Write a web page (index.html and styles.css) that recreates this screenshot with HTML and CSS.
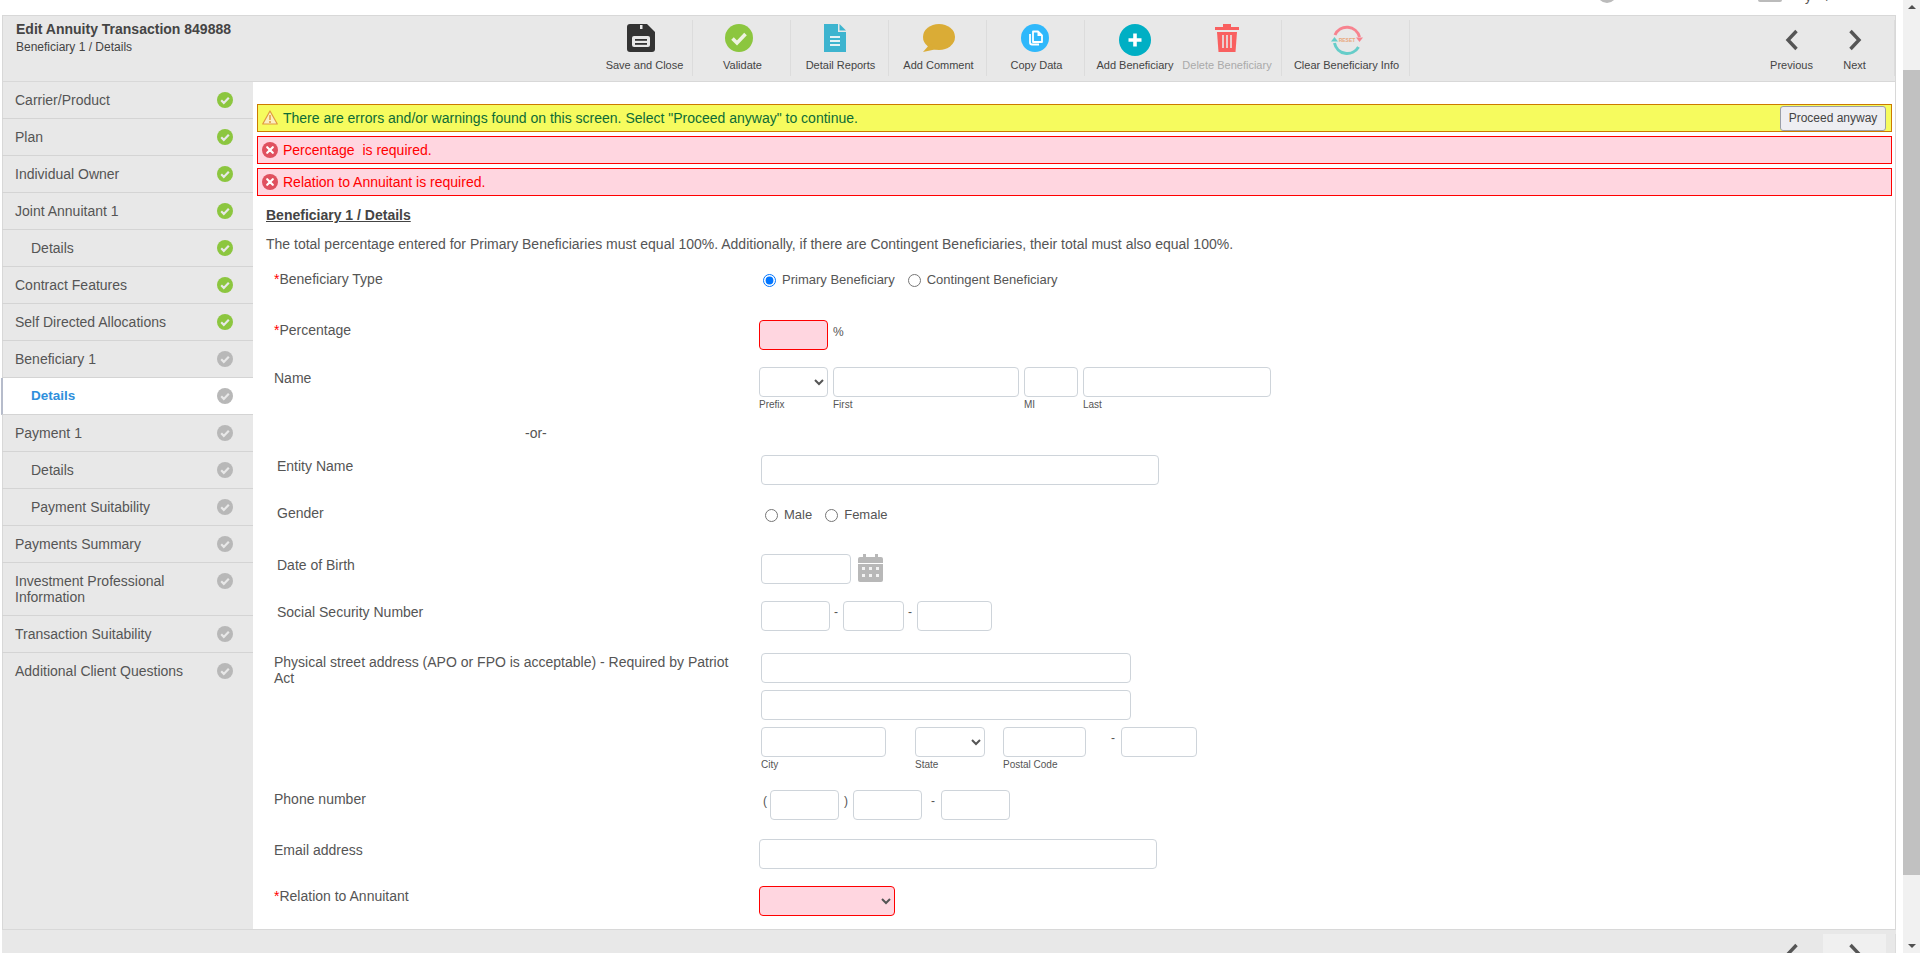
FILE: index.html
```html
<!DOCTYPE html>
<html lang="en">
<head>
    <meta charset="UTF-8">
    <title>Edit Annuity Transaction 849888</title>
    <link rel="stylesheet" href="styles.css">
</head>
<body>
    <svg class="sprites" width="0" height="0">
        <symbol id="i-check" viewBox="0 0 16 16">
            <circle cx="8" cy="8" r="8" fill="currentColor"/>
            <path d="M4.2 8.3l2.6 2.6 5-5.2" fill="none" stroke="#e8e8e8" stroke-width="2.2"/>
        </symbol>
        <symbol id="i-error" viewBox="0 0 16 16">
            <circle cx="8" cy="8" r="8" fill="#e0505f"/>
            <path d="M5.2 5.2l5.6 5.6M10.8 5.2l-5.6 5.6" stroke="#fff" stroke-width="2.2" stroke-linecap="round"/>
        </symbol>
        <symbol id="i-prev" viewBox="0 0 14 22">
            <path d="M11.5 2L3 11l8.500 9" fill="none" stroke="#555" stroke-width="3.4"/>
        </symbol>
        <symbol id="i-next" viewBox="0 0 14 22">
            <path d="M2.500 2L11 11l-8.500 9" fill="none" stroke="#555" stroke-width="3.4"/>
        </symbol>
    </svg>

    <div class="page">
        <div class="top-strip">
            <span class="top-ring"></span>
            <span class="top-box"></span>
            <span class="top-text">y /</span>
        </div>

        <div class="app">
            <header class="app-header">
                <div class="title-block">
                    <div class="title">Edit Annuity Transaction 849888</div>
                    <div class="subtitle">Beneficiary 1 / Details</div>
                </div>

                <div class="toolbar">
                    <div class="tool">
                        <svg class="tool-icon icon-left" width="28" height="28" viewBox="0 0 28 28">
                            <path d="M3 0h17l8 8v17a3 3 0 0 1-3 3H3a3 3 0 0 1-3-3V3a3 3 0 0 1 3-3z" fill="#333"/>
                            <rect x="13" y="1" width="2.500" height="4" fill="#e8e8e8"/>
                            <rect x="5" y="12" width="18" height="11" rx="2" fill="#e8e8e8"/>
                            <rect x="8" y="15" width="12" height="1.800" fill="#333"/>
                            <rect x="8" y="19" width="12" height="1.800" fill="#333"/>
                        </svg>
                        <span>Save and Close</span>
                    </div>
                    <div class="tool">
                        <svg class="tool-icon icon-left" width="28" height="28" viewBox="0 0 28 28">
                            <circle cx="14" cy="14" r="14" fill="#8cc63f"/>
                            <path d="M7.500 14.500l4.500 4.500 8.500-9" fill="none" stroke="#eef3e0" stroke-width="3.600"/>
                        </svg>
                        <span>Validate</span>
                    </div>
                    <div class="tool">
                        <svg class="tool-icon icon-far-left" width="22" height="28" viewBox="0 0 22 28">
                            <path d="M0 0h14v8h8v20H0z" fill="#3db4cf"/>
                            <path d="M15.500 0L22 6.500h-6.500z" fill="#3db4cf"/>
                            <path d="M6 13h10M6 17h10M6 21h10" stroke="#e4f2f5" stroke-width="1.800"/>
                        </svg>
                        <span>Detail Reports</span>
                    </div>
                    <div class="tool">
                        <svg class="tool-icon" width="32" height="28" viewBox="0 0 32 28">
                            <ellipse cx="16" cy="13" rx="16" ry="13" fill="#daac36"/>
                            <path d="M7 20L0 28l14-3z" fill="#daac36"/>
                        </svg>
                        <span>Add Comment</span>
                    </div>
                    <div class="tool">
                        <svg class="tool-icon icon-near-left" width="28" height="28" viewBox="0 0 28 28">
                            <circle cx="14" cy="14" r="14" fill="#2fb8fb"/>
                            <path d="M9 10v8.500a2 2 0 0 0 2 2h7" fill="none" stroke="#fff" stroke-width="1.800"/>
                            <path d="M12 7.500h5l4 4v6.500h-9z" fill="none" stroke="#fff" stroke-width="1.800" stroke-linejoin="round"/>
                            <path d="M16.500 7.500v4.500h4.500z" fill="#fff"/>
                        </svg>
                        <span>Copy Data</span>
                    </div>
                    <div class="tool tool-plain">
                        <svg class="tool-icon" width="32" height="32" viewBox="0 0 32 32">
                            <circle cx="16" cy="16" r="16" fill="#00afc4"/>
                            <path d="M16 9.500v13M9.500 16h13" stroke="#fff" stroke-width="3.600"/>
                        </svg>
                        <span>Add Beneficiary</span>
                    </div>
                    <div class="tool tool-delete is-disabled">
                        <svg class="tool-icon" width="24" height="28" viewBox="0 0 24 28">
                            <path d="M8 3V0h8v3h8v3H0V3z" fill="#f96060"/>
                            <path d="M2 8h20l-1.500 20H3.500z" fill="#f96060"/>
                            <path d="M8 11v13M12 11v13M16 11v13" stroke="#e8e8e8" stroke-width="1.600"/>
                        </svg>
                        <span>Delete Beneficiary</span>
                    </div>
                    <div class="tool tool-wide">
                        <svg class="tool-icon" width="32" height="32" viewBox="0 0 32 32">
                            <path d="M4 11A13 13 0 0 1 28.500 13" fill="none" stroke="#f7838f" stroke-width="3"/>
                            <path d="M25 13.500h7l-3.500 4.500z" fill="#f7838f"/>
                            <path d="M27.500 23A13 13 0 0 1 3.500 19" fill="none" stroke="#66cdc9" stroke-width="3"/>
                            <path d="M0 17.500h7l-3.500-4.500z" fill="#66cdc9"/>
                            <text x="16" y="18" class="reset-word">RESET</text>
                        </svg>
                        <span>Clear Beneficiary Info</span>
                    </div>
                </div>

                <div class="pager">
                    <div class="pager-btn">
                        <svg width="14" height="22"><use href="#i-prev"/></svg>
                        <span>Previous</span>
                    </div>
                    <div class="pager-btn">
                        <svg width="14" height="22"><use href="#i-next"/></svg>
                        <span>Next</span>
                    </div>
                </div>
            </header>

            <div class="app-body">
                <nav class="sidebar">
                    <a class="nav-item is-done">Carrier/Product<svg class="nav-check"><use href="#i-check"/></svg></a>
                    <a class="nav-item is-done">Plan<svg class="nav-check"><use href="#i-check"/></svg></a>
                    <a class="nav-item is-done">Individual Owner<svg class="nav-check"><use href="#i-check"/></svg></a>
                    <a class="nav-item is-done">Joint Annuitant 1<svg class="nav-check"><use href="#i-check"/></svg></a>
                    <a class="nav-item nav-sub is-done">Details<svg class="nav-check"><use href="#i-check"/></svg></a>
                    <a class="nav-item is-done">Contract Features<svg class="nav-check"><use href="#i-check"/></svg></a>
                    <a class="nav-item is-done">Self Directed Allocations<svg class="nav-check"><use href="#i-check"/></svg></a>
                    <a class="nav-item">Beneficiary 1<svg class="nav-check"><use href="#i-check"/></svg></a>
                    <a class="nav-item nav-sub is-active">Details<svg class="nav-check"><use href="#i-check"/></svg></a>
                    <a class="nav-item">Payment 1<svg class="nav-check"><use href="#i-check"/></svg></a>
                    <a class="nav-item nav-sub">Details<svg class="nav-check"><use href="#i-check"/></svg></a>
                    <a class="nav-item nav-sub">Payment Suitability<svg class="nav-check"><use href="#i-check"/></svg></a>
                    <a class="nav-item">Payments Summary<svg class="nav-check"><use href="#i-check"/></svg></a>
                    <a class="nav-item nav-tall">Investment Professional Information<svg class="nav-check"><use href="#i-check"/></svg></a>
                    <a class="nav-item">Transaction Suitability<svg class="nav-check"><use href="#i-check"/></svg></a>
                    <a class="nav-item">Additional Client Questions<svg class="nav-check"><use href="#i-check"/></svg></a>
                </nav>

                <main class="main">
                    <div class="alert alert-warn">
                        <svg width="16" height="15" viewBox="0 0 16 15">
                            <path d="M8 1L15.300 14H.7z" fill="#fbeec0" stroke="#e09a3e" stroke-width="1.200" stroke-linejoin="round"/>
                            <path d="M8 5v5M8 11v2" stroke="#e09a3e" stroke-width="1.500"/>
                        </svg>
                        <span>There are errors and/or warnings found on this screen. Select "Proceed anyway" to continue.</span>
                        <button class="proceed">Proceed anyway</button>
                    </div>
                    <div class="alert alert-error">
                        <svg width="16" height="16"><use href="#i-error"/></svg>
                        <span>Percentage&nbsp; is required.</span>
                    </div>
                    <div class="alert alert-error">
                        <svg width="16" height="16"><use href="#i-error"/></svg>
                        <span>Relation to Annuitant is required.</span>
                    </div>

                    <h2 class="section-title">Beneficiary 1 / Details</h2>
                    <p class="section-note">The total percentage entered for Primary Beneficiaries must equal 100%. Additionally, if there are Contingent Beneficiaries, their total must also equal 100%.</p>

                    <form class="form">
                        <div class="row row-type">
                            <label class="row-label"><em>*</em>Beneficiary Type</label>
                            <div class="fields radios">
                                <input type="radio" name="btype" checked><span>Primary Beneficiary</span>
                                <input type="radio" name="btype" class="radio-next"><span>Contingent Beneficiary</span>
                            </div>
                        </div>

                        <div class="row row-pct">
                            <label class="row-label"><em>*</em>Percentage</label>
                            <div class="fields">
                                <input class="box w-pct is-invalid"><span class="unit">%</span>
                            </div>
                        </div>

                        <div class="row row-name">
                            <label class="row-label">Name</label>
                            <div class="fields">
                                <div class="field"><select class="box w-pct"><option></option></select><small>Prefix</small></div>
                                <div class="field"><input class="box w-first"><small>First</small></div>
                                <div class="field"><input class="box w-mi"><small>MI</small></div>
                                <div class="field"><input class="box w-last"><small>Last</small></div>
                            </div>
                        </div>

                        <div class="row-or">-or-</div>

                        <div class="row row-entity is-inset">
                            <label class="row-label">Entity Name</label>
                            <div class="fields"><input class="box w-full"></div>
                        </div>

                        <div class="row row-gender is-inset">
                            <label class="row-label">Gender</label>
                            <div class="fields radios radios-gender">
                                <input type="radio" name="gender"><span>Male</span>
                                <input type="radio" name="gender" class="radio-next"><span>Female</span>
                            </div>
                        </div>

                        <div class="row row-dob is-inset">
                            <label class="row-label">Date of Birth</label>
                            <div class="fields">
                                <input class="box w-dob">
                                <svg class="calendar" width="25" height="28" viewBox="0 0 25 28">
                                    <path d="M5 0h3v3h9V0h3v3h3a2 2 0 0 1 2 2v4H0V5a2 2 0 0 1 2-2h3z" fill="#b8b8b8"/>
                                    <path d="M0 10h25v16a2 2 0 0 1-2 2H2a2 2 0 0 1-2-2z" fill="#b8b8b8"/>
                                    <path d="M4 13h3v3H4zM11 13h3v3h-3zM18 13h3v3h-3zM4 20h3v3H4zM11 20h3v3h-3zM18 20h3v3h-3z" fill="#f2f2f2"/>
                                </svg>
                            </div>
                        </div>

                        <div class="row row-ssn is-inset">
                            <label class="row-label">Social Security Number</label>
                            <div class="fields">
                                <input class="box w-pct"><span class="sep">-</span>
                                <input class="box w-ssn2"><span class="sep">-</span>
                                <input class="box w-ssn3">
                            </div>
                        </div>

                        <div class="row row-addr">
                            <label class="row-label row-label-flush">Physical street address (APO or FPO is acceptable) - Required by Patriot Act</label>
                            <div class="fields fields-stack">
                                <input class="box w-addr">
                                <input class="box w-addr">
                                <div class="addr-line">
                                    <div class="field"><input class="box w-city"><small>City</small></div>
                                    <div class="field field-state"><select class="box w-state"><option></option></select><small>State</small></div>
                                    <div class="field field-zip"><input class="box w-zip"><small>Postal Code</small></div>
                                    <span class="sep sep-zip">-</span>
                                    <div class="field"><input class="box w-zip4"></div>
                                </div>
                            </div>
                        </div>

                        <div class="row row-phone">
                            <label class="row-label row-label-flush">Phone number</label>
                            <div class="fields phone">
                                <span class="paren">(</span><input class="box w-pct"><span class="paren paren-close">)</span>
                                <input class="box w-pct"><span class="sep sep-phone">-</span>
                                <input class="box w-pct">
                            </div>
                        </div>

                        <div class="row row-email">
                            <label class="row-label">Email address</label>
                            <div class="fields"><input class="box w-email"></div>
                        </div>

                        <div class="row row-rel">
                            <label class="row-label row-label-rel"><em>*</em>Relation to Annuitant</label>
                            <div class="fields"><select class="box w-rel is-invalid"><option></option></select></div>
                        </div>
                    </form>
                </main>
            </div>

            <footer class="app-footer">
                <div class="pager pager-foot">
                    <div class="pager-btn">
                        <svg width="14" height="22"><use href="#i-prev"/></svg>
                    </div>
                    <div class="pager-btn is-hover">
                        <svg width="14" height="22"><use href="#i-next"/></svg>
                    </div>
                </div>
            </footer>
        </div>
    </div>

    <div class="scrollbar">
        <span class="arrow-up"></span>
        <div class="thumb"></div>
        <span class="arrow-down"></span>
    </div>
</body>
</html>
```

FILE: styles.css
```css
* {
    box-sizing: border-box;
}

html, body {
    height: 100%;
}

body {
    display: flex;
    margin: 0;
    overflow: hidden;
    background: #fff;
    color: #555;
    font-family: "Liberation Sans", Arial, sans-serif;
    font-size: 14px;
}

.sprites {
    position: absolute;
}

.page {
    flex: 1;
    display: flex;
    flex-direction: column;
    min-width: 0;
    padding: 0 7px 0 2px;
}

/* what is left of the page header above the app, cut by the scroll */
.top-strip {
    flex: none;
    height: 15px;
    display: flex;
    justify-content: flex-end;
    overflow: hidden;
}

.top-ring {
    width: 20px;
    height: 20px;
    margin: -17px 141px 0 0;
    border: 3px solid #bbb;
    border-radius: 50%;
}

.top-box {
    width: 24px;
    height: 12px;
    margin: -10px 23px 0 0;
    border-radius: 2px;
    background: #bbb;
}

.top-text {
    width: 91px;
    margin-top: -11px;
    font-size: 13px;
    word-spacing: 11px;
}

.app {
    flex: 1;
    display: flex;
    flex-direction: column;
    min-height: 0;
}

/* header */
.app-header {
    flex: none;
    height: 67px;
    display: flex;
    background: #e8e8e8;
    border: 1px solid #d8d8d8;
    border-width: 1px 1px 1px 0;
    box-shadow: inset 1px 0 0 #d8d8d8;
}

.title-block {
    width: 593px;
    padding: 5px 0 0 14px;
}

.title {
    color: #444;
    font-size: 14px;
    font-weight: bold;
    line-height: 17px;
}

.subtitle {
    margin-top: 2px;
    color: #444;
    font-size: 12px;
    line-height: 15px;
}

.toolbar {
    display: flex;
    padding-top: 4px;
}

.tool {
    width: 98px;
    height: 56px;
    display: flex;
    flex-direction: column;
    align-items: center;
    padding-left: 2px;
    border-right: 1px solid #dcdcdc;
    color: #444;
    font-size: 11px;
    white-space: nowrap;
}

.tool-icon {
    flex: none;
    margin-top: 4px;
}

.icon-left {
    margin-right: 7px;
}

.icon-far-left {
    margin-right: 12px;
}

.icon-near-left {
    margin-right: 4px;
}

.tool span {
    margin-top: auto;
    margin-bottom: 4px;
    line-height: 13px;
}

.tool-plain {
    border-right: none;
}

.tool-delete {
    width: 99px;
    padding: 0 10px 0 0;
}

.tool-wide {
    width: 128px;
}

.is-disabled span {
    color: #aaa;
}

.reset-word {
    fill: #e9a77c;
    font-size: 5px;
    font-weight: bold;
    text-anchor: middle;
    font-family: "Liberation Sans", sans-serif;
}

.pager {
    display: flex;
    margin-left: auto;
    margin-top: 4px;
    padding-right: 8px;
    height: 56px;
    border-right: 1px solid #dcdcdc;
}

.pager-btn {
    width: 63px;
    display: flex;
    flex-direction: column;
    align-items: center;
    color: #444;
    font-size: 11px;
}

.pager-btn svg {
    flex: none;
    margin-top: 9px;
}

.pager-btn span {
    margin-top: auto;
    margin-bottom: 4px;
    line-height: 13px;
}

/* body */
.app-body {
    flex: 1;
    display: flex;
    min-height: 0;
}

.sidebar {
    flex: none;
    width: 251px;
    background: #e8e8e8;
    box-shadow: inset 1px 0 0 #d8d8d8;
}

.nav-item {
    height: 37px;
    display: flex;
    justify-content: space-between;
    padding: 10px 20px 0 13px;
    border-bottom: 1px solid #d4d4d4;
    color: #555;
    font-size: 14px;
    line-height: 16px;
}

.nav-item:last-child {
    border-bottom: none;
}

.nav-sub {
    padding-left: 29px;
}

.nav-tall {
    height: 53px;
}

.nav-item.is-active {
    margin-left: -1px;
    padding-left: 28px;
    border-left: 2px solid #b6bccb;
    background: #fff;
    color: #2f8fdc;
    font-size: 13.500px;
    font-weight: bold;
}

.nav-check {
    flex: none;
    width: 16px;
    height: 16px;
    margin: 0 0 0 30px;
    color: #b8b8b8;
}

.is-done .nav-check {
    color: #8cc63f;
}

.main {
    flex: 1;
    min-width: 0;
    padding: 22px 3px 0 4px;
    border-right: 1px solid #d8d8d8;
    overflow: hidden;
}

.alert {
    height: 28px;
    display: flex;
    align-items: center;
    gap: 5px;
    margin-bottom: 4px;
    padding: 0 5px 0 4px;
    font-size: 14px;
}

.alert svg {
    flex: none;
    margin-top: -1px;
}

.alert-warn {
    border: 1px solid #cc7a00;
    background: #f6fb5e;
    color: #0c6b36;
}

.alert-error {
    border: 1px solid #f00;
    background: #ffd6e0;
    color: #f00;
}

.proceed {
    width: 106px;
    height: 25px;
    margin-left: auto;
    padding: 0;
    border: 1px solid #9a9ea8;
    border-radius: 3px;
    background: #eeeef2;
    color: #444;
    font-family: inherit;
    font-size: 12px;
}

.section-title {
    margin: 11px 0 0 9px;
    color: #444;
    font-size: 14px;
    line-height: 17px;
    text-decoration: underline;
}

.section-note {
    margin: 12px 0 0 9px;
    font-size: 14px;
    line-height: 17px;
}

/* form */
.form {
    padding: 9px 0 0 17px;
}

.row {
    display: flex;
}

.row-label {
    flex: none;
    width: 485px;
    padding: 3px 25px 0 0;
    line-height: 16px;
    font-size: 14px;
}

.row-label em {
    color: #f00;
    font-style: normal;
}

.row-label-flush {
    padding-top: 1px;
}

.row-label-rel {
    padding-top: 2px;
}

.fields {
    display: flex;
    align-items: flex-start;
    gap: 5px;
}

.fields-stack {
    flex-direction: column;
    gap: 7px;
    padding-left: 2px;
}

.is-inset .row-label {
    width: 487px;
    padding-left: 3px;
}

.row-type {
    height: 58px;
}

.row-type .row-label {
    padding-top: 9px;
}

.row-pct {
    height: 47px;
}

.row-pct .row-label {
    padding-top: 2px;
}

.row-name {
    height: 57px;
}

.row-or {
    height: 31px;
    padding: 1px 0 0 251px;
    line-height: 16px;
}

.row-entity {
    height: 49px;
}

.row-gender {
    height: 50px;
}

.is-inset.row-gender .row-label {
    padding-top: 1px;
}

.row-dob {
    height: 47px;
}

.row-ssn {
    height: 52px;
}

.row-addr {
    height: 137px;
}

.row-phone {
    height: 49px;
}

.row-email {
    height: 47px;
}

.row-rel {
    height: 42px;
}

.radios {
    align-items: center;
    gap: 0;
    height: 16px;
    margin-top: 10px;
    padding-left: 4px;
    font-size: 13px;
    line-height: 16px;
}

.radios input {
    width: 13px;
    height: 13px;
    margin: 0 6px 0 0;
}

.radios .radio-next {
    margin-left: 13px;
}

.radios-gender {
    margin-top: 3px;
    padding-left: 4px;
}

.box {
    height: 30px;
    border: 1px solid #ced4da;
    border-radius: 4px;
    background: #fff;
    color: #555;
    font-family: inherit;
    font-size: 13px;
}

.box.is-invalid {
    border-color: #f00;
    background: #ffd6e0;
}

.unit {
    margin-top: 5px;
    font-size: 12px;
}

.field {
    display: flex;
    flex-direction: column;
}

.field small {
    margin-top: 2px;
    font-size: 10px;
    line-height: 12px;
}

.w-pct { width: 69px; }
.w-first { width: 186px; }
.w-mi { width: 54px; }
.w-last { width: 188px; }
.w-full { width: 398px; }
.w-dob { width: 90px; }
.w-ssn2 { width: 61px; }
.w-ssn3 { width: 75px; }
.w-addr { width: 370px; }
.w-city { width: 125px; }
.w-state { width: 70px; }
.w-zip { width: 83px; }
.w-zip4 { width: 76px; }
.w-email { width: 398px; }
.w-rel { width: 136px; }

.calendar {
    margin-left: 2px;
}

.sep {
    width: 5px;
    line-height: 22px;
    font-size: 12px;
}

.row-ssn .fields {
    gap: 4px;
}

.addr-line {
    display: flex;
    align-items: flex-start;
}

.field-state {
    margin-left: 29px;
}

.field-zip {
    margin-left: 18px;
}

.sep-zip {
    width: 4px;
    margin: 0 6px 0 25px;
}

.phone {
    gap: 0;
    padding-left: 4px;
}

.paren {
    width: 7px;
    line-height: 22px;
    font-size: 12px;
}

.paren-close {
    width: 14px;
    padding-left: 5px;
}

.sep-phone {
    width: 4px;
    margin: 0 6px 0 9px;
}

/* footer */
.app-footer {
    flex: none;
    height: 24px;
    background: #e8e8e8;
    border-top: 1px solid #d8d8d8;
    overflow: hidden;
    display: flex;
    justify-content: flex-end;
}

.pager-foot {
    margin-top: 4px;
    height: 20px;
    padding-right: 9px;
}

.pager-foot .is-hover {
    background: #f0f0f0;
}

/* fake page scrollbar */
.scrollbar {
    flex: none;
    width: 17px;
    display: flex;
    flex-direction: column;
    align-items: center;
    background: #f1f1f1;
}

.arrow-up, .arrow-down {
    flex: none;
    width: 0;
    height: 0;
    border: 4px solid transparent;
}

.arrow-up {
    margin: 5px 0 0;
    border-top: 0;
    border-bottom-color: #505050;
}

.arrow-down {
    margin: auto 0 5px;
    border-bottom: 0;
    border-top-color: #505050;
}

.thumb {
    width: 100%;
    height: 805px;
    margin-top: 61px;
    background: #c1c1c1;
}
```
